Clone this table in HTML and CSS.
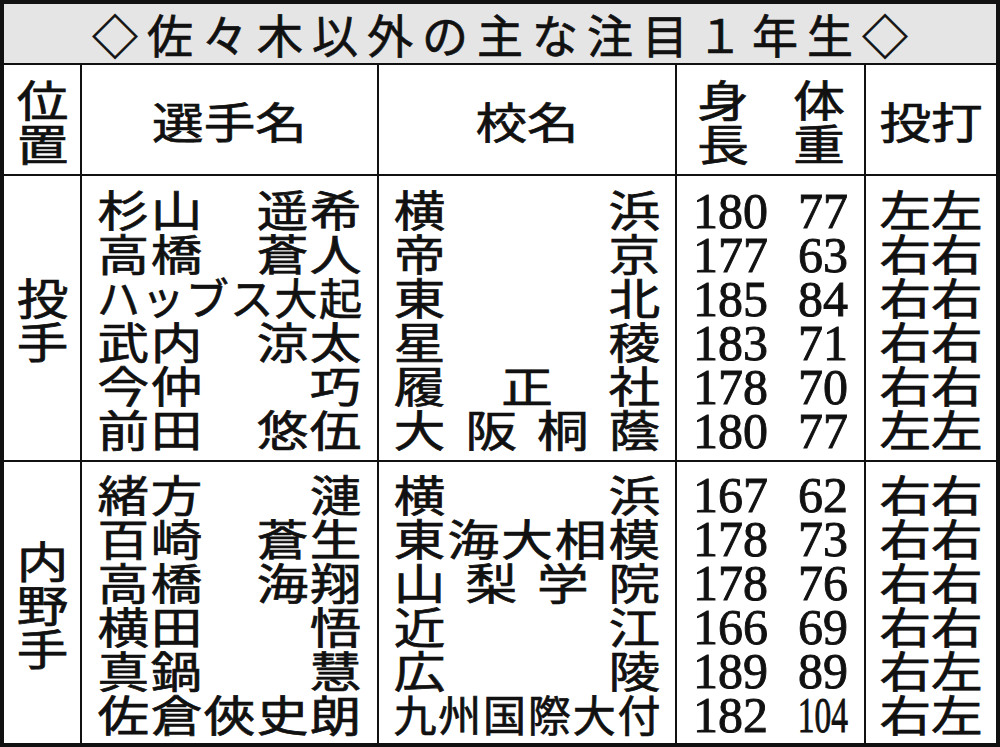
FILE: index.html
```html
<!DOCTYPE html>
<html lang="ja">
<head>
<meta charset="utf-8">
<title>佐々木以外の主な注目1年生</title>
<link rel="stylesheet" href="styles.css">
</head>
<body>
<div class="sheet">
  <div class="title">◇佐々木以外の主な注目１年生◇</div>

  <div class="hd"><div class="stack sx"><span>位</span><span>置</span></div></div>
  <div class="hd"><span class="sx">選手名</span></div>
  <div class="hd"><span class="sx">校名</span></div>
  <div class="hd"><div class="quad sx"><span>身</span><span>体</span><span>長</span><span>重</span></div></div>
  <div class="hd"><span class="sx">投打</span></div>

  <!-- 投手 -->
  <div class="body"><div class="stack sx"><span>投</span><span>手</span></div></div>
  <div class="body">
    <div class="r nm"><span>杉</span><span>山</span><span></span><span>遥</span><span>希</span></div>
    <div class="r nm"><span>高</span><span>橋</span><span></span><span>蒼</span><span>人</span></div>
    <div class="r nm6"><span>ハ</span><span>ッ</span><span>ブ</span><span>ス</span><span>大</span><span>起</span></div>
    <div class="r nm"><span>武</span><span>内</span><span></span><span>涼</span><span>太</span></div>
    <div class="r nm"><span>今</span><span>仲</span><span></span><span></span><span>巧</span></div>
    <div class="r nm"><span>前</span><span>田</span><span></span><span>悠</span><span>伍</span></div>
  </div>
  <div class="body">
    <div class="r sc"><span>横</span><span>浜</span></div>
    <div class="r sc"><span>帝</span><span>京</span></div>
    <div class="r sc"><span>東</span><span>北</span></div>
    <div class="r sc"><span>星</span><span>稜</span></div>
    <div class="r sc"><span>履</span><span>正</span><span>社</span></div>
    <div class="r sc"><span>大</span><span>阪</span><span>桐</span><span>蔭</span></div>
  </div>
  <div class="body nums">
    <div class="r nu"><span>180</span><span>77</span></div>
    <div class="r nu"><span>177</span><span>63</span></div>
    <div class="r nu"><span>185</span><span>84</span></div>
    <div class="r nu"><span>183</span><span>71</span></div>
    <div class="r nu"><span>178</span><span>70</span></div>
    <div class="r nu"><span>180</span><span>77</span></div>
  </div>
  <div class="body">
    <div class="r pb"><span>左</span><span>左</span></div>
    <div class="r pb"><span>右</span><span>右</span></div>
    <div class="r pb"><span>右</span><span>右</span></div>
    <div class="r pb"><span>右</span><span>右</span></div>
    <div class="r pb"><span>右</span><span>右</span></div>
    <div class="r pb"><span>左</span><span>左</span></div>
  </div>

  <!-- 内野手 -->
  <div class="body"><div class="stack sx"><span>内</span><span>野</span><span>手</span></div></div>
  <div class="body">
    <div class="r nm"><span>緒</span><span>方</span><span></span><span></span><span>漣</span></div>
    <div class="r nm"><span>百</span><span>崎</span><span></span><span>蒼</span><span>生</span></div>
    <div class="r nm"><span>高</span><span>橋</span><span></span><span>海</span><span>翔</span></div>
    <div class="r nm"><span>横</span><span>田</span><span></span><span></span><span>悟</span></div>
    <div class="r nm"><span>真</span><span>鍋</span><span></span><span></span><span>慧</span></div>
    <div class="r nm"><span>佐</span><span>倉</span><span>俠</span><span>史</span><span>朗</span></div>
  </div>
  <div class="body">
    <div class="r sc"><span>横</span><span>浜</span></div>
    <div class="r sc"><span>東</span><span>海</span><span>大</span><span>相</span><span>模</span></div>
    <div class="r sc"><span>山</span><span>梨</span><span>学</span><span>院</span></div>
    <div class="r sc"><span>近</span><span>江</span></div>
    <div class="r sc"><span>広</span><span>陵</span></div>
    <div class="r sc6"><span>九</span><span>州</span><span>国</span><span>際</span><span>大</span><span>付</span></div>
  </div>
  <div class="body nums">
    <div class="r nu"><span>167</span><span>62</span></div>
    <div class="r nu"><span>178</span><span>73</span></div>
    <div class="r nu"><span>178</span><span>76</span></div>
    <div class="r nu"><span>166</span><span>69</span></div>
    <div class="r nu"><span>189</span><span>89</span></div>
    <div class="r nu"><span>182</span><span class="cond">104</span></div>
  </div>
  <div class="body">
    <div class="r pb"><span>右</span><span>右</span></div>
    <div class="r pb"><span>右</span><span>右</span></div>
    <div class="r pb"><span>右</span><span>右</span></div>
    <div class="r pb"><span>右</span><span>右</span></div>
    <div class="r pb"><span>右</span><span>左</span></div>
    <div class="r pb"><span>右</span><span>左</span></div>
  </div>
</div>
</body>
</html>
```

FILE: styles.css
```css
* {
  box-sizing: border-box;
  margin: 0;
  padding: 0;
}

html, body {
  background: #ffffff;
}

body {
  font-family: "Noto Sans CJK JP", "Noto Sans", sans-serif;
  color: #111111;
  width: 1000px;
  height: 747px;
  overflow: hidden;
  -webkit-text-stroke: 0.7px #111111;
}

.sheet {
  width: 1000px;
  height: 747px;
  border: 4px solid #111111;
  background: #111111;
  display: grid;
  grid-template-columns: 76px 295px 296px 187px 130px;
  grid-template-rows: 59px 109px 284px 281px;
  gap: 2px;
}

.sheet > div {
  background: #ffffff;
}

.sheet > .title {
  grid-column: 1 / -1;
  background: #e5e5e5;
  display: flex;
  align-items: center;
  justify-content: center;
  font-size: 46px;
  line-height: 59px;
  letter-spacing: 9px;
  padding-left: 9px;
}

.hd {
  display: flex;
  align-items: center;
  justify-content: center;
  font-size: 43px;
  line-height: 44px;
}

.sx {
  display: inline-block;
  transform: scaleX(1.2);
}

.stack {
  display: flex;
  flex-direction: column;
  align-items: center;
}

.quad {
  display: grid;
  grid-template-columns: 80px 80px;
  justify-items: center;
}

.body {
  display: flex;
  flex-direction: column;
  align-items: center;
  justify-content: center;
  font-size: 43px;
  line-height: 44px;
}

.r {
  height: 44px;
}

.nm {
  display: grid;
  grid-template-columns: repeat(5, 1fr);
  justify-items: center;
  width: 221px;
  transform: scaleX(1.2);
}

.nm6 {
  display: flex;
  justify-content: space-between;
  width: 265px;
}

.sc {
  display: flex;
  justify-content: space-between;
  width: 222px;
  transform: scaleX(1.2);
}

.sc6 {
  display: flex;
  justify-content: space-between;
  width: 267px;
}

.nums {
  padding-top: 5px;
}

.nu {
  display: grid;
  grid-template-columns: 1fr 1fr;
  width: 155px;
  font-family: "Liberation Serif", serif;
  font-size: 50px;
  -webkit-text-stroke: 0.9px #111111;
}

.nu > span:last-child {
  justify-self: end;
}

.cond {
  display: inline-block;
  transform: scaleX(0.67);
  transform-origin: right center;
}

.pb {
  display: flex;
  justify-content: space-between;
  width: 86px;
  transform: scaleX(1.2);
}
```
